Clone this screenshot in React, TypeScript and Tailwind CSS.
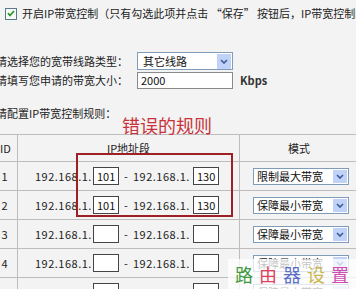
import React from "react";

const FONT = { fontFamily: '"Noto Sans CJK SC", "Noto Sans", sans-serif' };

function Chevron() {
  return (
    <svg width="8" height="5" viewBox="0 0 8 5">
      <path d="M1 1 L4 4 L7 1" fill="none" stroke="#3c5a96" strokeWidth="1.6" />
    </svg>
  );
}

function Sel({ text }: { text: string }) {
  return (
    <div className="flex items-center h-[17px] w-[96px] border border-[#7f9db9] bg-white">
      <span className="flex-1 pl-[3px] text-[11px] leading-none text-[#111] whitespace-nowrap">{text}</span>
      <span className="w-[14px] h-[13px] mr-[1px] bg-[#c1d2f8] flex items-center justify-center">
        <Chevron />
      </span>
    </div>
  );
}

function Box({ v }: { v: string }) {
  return (
    <div className="w-[26px] h-[18px] border border-[#444] bg-white flex items-start pl-[3px] pt-[1px] text-[11px] leading-[14px] text-[#111]">
      {v}
    </div>
  );
}

const rows = [
  { id: "1", a: "101", b: "130", mode: "限制最大带宽" },
  { id: "2", a: "101", b: "130", mode: "保障最小带宽" },
  { id: "3", a: "", b: "", mode: "保障最小带宽" },
  { id: "4", a: "", b: "", mode: "保障最小带宽" },
  { id: "5", a: "", b: "", mode: "保障最小带宽" },
];

export default function App() {
  return (
    <div
      className="relative w-[356px] h-[289px] overflow-hidden bg-[#f3f3f3] text-[#222] pt-[7px]"
      style={FONT}
    >
      {/* checkbox line */}
      <div className="h-[13px] flex items-center pl-[5px] gap-[5px] whitespace-nowrap">
        <div className="w-[12px] h-[12px] border border-[#5a7a8a] bg-[#f8faf8] flex items-center justify-center shrink-0">
          <svg width="8" height="7" viewBox="0 0 8 7">
            <path d="M1 3.2 L3 5.5 L7 1" fill="none" stroke="#2a9a2a" strokeWidth="1.8" />
          </svg>
        </div>
        <span className="text-[11px] leading-none">
          开启IP带宽控制（只有勾选此项并点击 “保存” 按钮后，IP带宽控制的设置才能生效）
        </span>
      </div>

      {/* line type */}
      <div className="mt-[32px] h-[18px] flex items-center">
        <span className="-ml-[4px] w-[141px] text-[11px] leading-none whitespace-nowrap">请选择您的宽带线路类型：</span>
        <div className="flex items-center h-[18px] w-[96px] border border-[#7f9db9] bg-white">
          <span className="flex-1 pl-[5px] text-[11px] leading-none text-[#111]">其它线路</span>
          <span className="w-[14px] h-[15px] mr-[1px] bg-[#c1d2f8] flex items-center justify-center">
            <Chevron />
          </span>
        </div>
      </div>

      {/* bandwidth */}
      <div className="mt-[2px] h-[17px] flex items-center">
        <span className="-ml-[4px] w-[141px] text-[11px] leading-none whitespace-nowrap">请填写您申请的带宽大小：</span>
        <div className="h-[17px] w-[96px] border border-[#8a8a8a] bg-white flex items-center pl-[3px] text-[11px] leading-none text-[#111]">
          2000
        </div>
        <span className="ml-[7px] text-[11px] leading-none font-bold text-[#333]">Kbps</span>
      </div>

      {/* config label */}
      <div className="mt-[17px] h-[14px] flex items-center -ml-[4px] text-[11px] leading-none whitespace-nowrap">
        请配置IP带宽控制规则：
      </div>

      {/* table */}
      <div className="mt-[14px] -ml-[10px] w-[370px] border-t border-[#bcbcbc]">
        <div className="grid grid-cols-[28px_222px_120px] h-[27px] border-b border-[#bcbcbc]">
          <div className="border-r border-[#bcbcbc] flex items-center justify-center text-[11px] leading-none pl-[4px]">ID</div>
          <div className="border-r border-[#bcbcbc] flex items-center justify-center text-[11px] leading-none">IP地址段</div>
          <div className="flex items-center justify-center text-[11px] leading-none pr-[2px]">模式</div>
        </div>
        {rows.map((r) => (
          <div key={r.id} className="grid grid-cols-[28px_222px_120px] h-[29px] border-b border-[#bcbcbc]">
            <div className="border-r border-[#bcbcbc] flex items-center justify-center text-[11px] leading-none pl-[2px]">
              {r.id}
            </div>
            <div className="border-r border-[#bcbcbc] flex items-center pl-[17px] text-[11px] leading-none">
              <span className="w-[58px] tracking-[0.5px] whitespace-nowrap">192.168.1.</span>
              <Box v={r.a} />
              <span className="w-[14px] text-center">-</span>
              <span className="w-[60px] tracking-[0.5px] whitespace-nowrap">192.168.1.</span>
              <Box v={r.b} />
            </div>
            <div className="flex items-center pl-[13px]">
              <Sel text={r.mode} />
            </div>
          </div>
        ))}
      </div>

      {/* annotation */}
      <div className="absolute left-[122px] top-[116px] text-[18px] leading-[18px] text-[#c8323a] whitespace-nowrap">
        错误的规则
      </div>
      <div className="absolute left-[76px] top-[153px] w-[157px] h-[64px] border-2 border-[#9e1f24]" />

      {/* watermark */}
      <div className="absolute left-[228px] top-[259px] w-[128px] h-[30px] bg-white/75 flex items-center pl-[7px] gap-[6px] text-[18px] leading-none">
        <span className="text-[#3f9a3c]">路</span>
        <span className="text-[#e2405c]">由</span>
        <span className="text-[#5a6ec8]">器</span>
        <span className="text-[#c9b54a]">设</span>
        <span className="text-[#d24cb0]">置</span>
      </div>
    </div>
  );
}
